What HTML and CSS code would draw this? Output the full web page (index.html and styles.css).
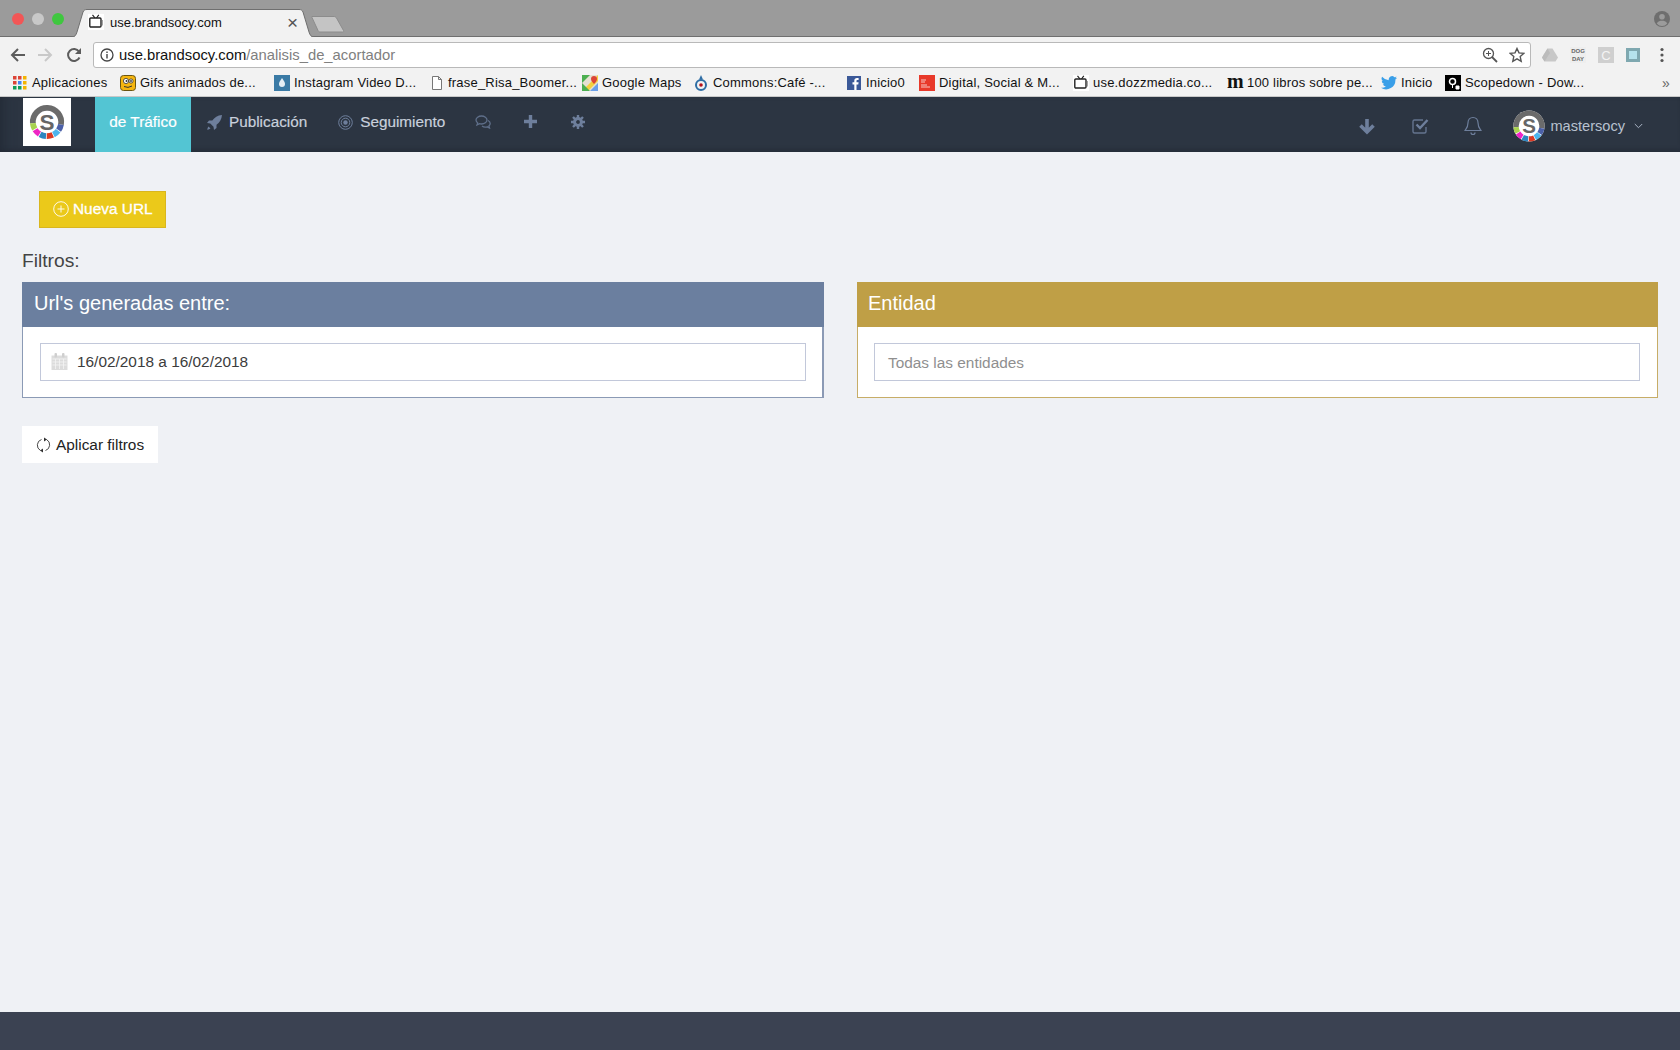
FILE: index.html
```html
<!DOCTYPE html>
<html lang="en">
<head>
  <meta charset="UTF-8" />
  <title>use.brandsocy.com</title>
  <link rel="stylesheet" href="styles.css">
</head>
<body>
  <svg class="sprite" width="0" height="0">
    <defs>
      <symbol id="tv" viewBox="0 0 16 16">
        <rect width="16" height="16" fill="#fff"/>
        <path d="M4.500 .8 7 4M10.800 .8 8.500 4" stroke="#222" stroke-width="1.200" fill="none"/>
        <rect x="1.800" y="4" width="11.200" height="9" rx="1" fill="none" stroke="#222" stroke-width="1.400"/>
        <path d="M13.800 6v5.500" stroke="#666" stroke-width="1.600"/>
      </symbol>
      <symbol id="brand" viewBox="0 0 48 48">
        <circle cx="24" cy="24" r="20.500" fill="#fff"/>
        <g fill="none" stroke-width="7">
          <path d="M7.060 25.480A17 17 0 1 1 40.740 26.950" stroke="#6b6b6b"/>
          <path d="M40.740 26.950A17 17 0 0 1 37.930 33.750" stroke="#4b60a8"/>
          <path d="M37.400 34.470A17 17 0 0 1 31.720 39.150" stroke="#4db4ec"/>
          <path d="M30.910 39.530A17 17 0 0 1 23.700 41" stroke="#da3a24"/>
          <path d="M22.810 40.960A17 17 0 0 1 15.760 38.870" stroke="#2d85c0"/>
          <path d="M14.990 38.420A17 17 0 0 1 9.740 33.260" stroke="#ee25c4"/>
          <path d="M9.280 32.500A17 17 0 0 1 7.060 25.480" stroke="#a8d24f"/>
        </g>
        <text x="24" y="33" text-anchor="middle" class="logo-s">S</text>
      </symbol>
    </defs>
  </svg>

  <div class="tabstrip">
    <div class="lights">
      <span class="light red"></span>
      <span class="light grey"></span>
      <span class="light green"></span>
    </div>
    <div class="tab">
      <svg class="tab-shape" viewBox="0 0 242 28" preserveAspectRatio="none"><path d="M0 28 C3 28 4 26 5 23 L11 3 C12 1 13 .5 15 .5 H227 C229 .5 230 1 231 3 L237 23 C238 26 239 28 242 28" fill="#f2f2f2" stroke="#6f6f6f"/></svg>
      <svg class="fav" width="16" height="16"><use href="#tv"/></svg>
      <span class="tab-title">use.brandsocy.com</span>
      <span class="tab-close">×</span>
    </div>
    <svg class="newtab" width="34" height="18" viewBox="0 0 34 18"><path d="M1 1.500H23C24 1.500 25 2 25.500 3L32.500 15.500C33 16.500 32.500 17 31.500 17H9C8 17 7.500 16.500 7 15.500L1 2.500C.5 1.800 .5 1.500 1 1.500Z" fill="#c4c4c4" stroke="#8c8c8c"/></svg>
    <svg class="profile" width="18" height="18" viewBox="0 0 18 18"><circle cx="9" cy="9" r="8" fill="#6e6e6e"/><circle cx="9" cy="6.800" r="2.800" fill="#9b9b9b"/><path d="M3.800 13.500C5 11.300 7 10.800 9 10.800s4 .5 5.200 2.700A6.500 6.500 0 0 1 3.800 13.500Z" fill="#9b9b9b"/></svg>
  </div>

  <div class="toolbar">
    <svg class="tool back" width="18" height="18" viewBox="0 0 18 18"><path d="M16 9H3M9 3 3 9l6 6" fill="none" stroke="#5c5c5c" stroke-width="2"/></svg>
    <svg class="tool forward" width="18" height="18" viewBox="0 0 18 18"><path d="M2 9h13M9 3l6 6-6 6" fill="none" stroke="#c9c9c9" stroke-width="2"/></svg>
    <svg class="tool reload" width="18" height="18" viewBox="0 0 18 18"><path d="M14.500 11.500A6 6 0 1 1 14 5.500" fill="none" stroke="#5c5c5c" stroke-width="2"/><path d="M16 2v6h-6z" fill="#5c5c5c"/></svg>
    <div class="omnibox">
      <svg class="info" width="14" height="14" viewBox="0 0 14 14"><circle cx="7" cy="7" r="6" fill="none" stroke="#444" stroke-width="1.300"/><path d="M7 6v4.500M7 3.500v1.500" stroke="#444" stroke-width="1.400"/></svg>
      <span class="url">use.brandsocy.com<span class="url-path">/analisis_de_acortador</span></span>
      <svg class="zoom-ic" width="16" height="16" viewBox="0 0 16 16"><circle cx="6.500" cy="6.500" r="5" fill="none" stroke="#555" stroke-width="1.300"/><path d="M10 10l5 5" stroke="#555" stroke-width="1.800"/><path d="M6.500 4v5M4 6.500h5" stroke="#555"/></svg>
      <svg class="star" width="16" height="16" viewBox="0 0 16 16"><path d="M8 1.500l2 4.400 4.800.5-3.600 3.200 1 4.700L8 11.900l-4.200 2.400 1-4.700L1.200 6.400 6 5.900z" fill="none" stroke="#555" stroke-width="1.400"/></svg>
    </div>
    <div class="exts">
      <svg width="16" height="16" viewBox="0 0 16 16"><path d="M5.500 1.500h5L16 10.500l-2.500 4h-11L0 10.500z" fill="#c8c8c8"/><path d="M5.500 1.500 8 6l-5.500 8.500L0 10.500z" fill="#bcbcbc"/></svg>
      <span class="ext-dog">DOG<br>DAY</span>
      <span class="ext-c">C</span>
      <span class="ext-square"><span></span></span>
      <svg width="4" height="16" viewBox="0 0 4 16"><circle cx="2" cy="2.500" r="1.600" fill="#555"/><circle cx="2" cy="8" r="1.600" fill="#555"/><circle cx="2" cy="13.500" r="1.600" fill="#555"/></svg>
    </div>
  </div>

  <div class="bookmarks">
    <a class="bm w-apps"><svg width="14" height="14" viewBox="0 0 14 14"><g><rect width="3.500" height="3.500" fill="#dc4437"/><rect x="5" width="3.500" height="3.500" fill="#dc4437"/><rect x="10" width="3.500" height="3.500" fill="#f4b400"/><rect y="5" width="3.500" height="3.500" fill="#dc4437"/><rect x="5" y="5" width="3.500" height="3.500" fill="#4285f4"/><rect x="10" y="5" width="3.500" height="3.500" fill="#f4b400"/><rect y="10" width="3.500" height="3.500" fill="#0f9d58"/><rect x="5" y="10" width="3.500" height="3.500" fill="#0f9d58"/><rect x="10" y="10" width="3.500" height="3.500" fill="#f4b400"/></g></svg>Aplicaciones</a>
    <a class="bm w-gifs"><svg width="16" height="16" viewBox="0 0 16 16"><rect x=".5" y=".5" width="15" height="15" rx="3" fill="#f5b50f" stroke="#6b5510"/><circle cx="6" cy="6" r="2.600" fill="#fff" stroke="#333" stroke-width=".8"/><circle cx="11" cy="6" r="2.100" fill="#fff" stroke="#333" stroke-width=".8"/><circle cx="6.500" cy="6" r="1" fill="#333"/><circle cx="11" cy="6" r=".9" fill="#333"/><path d="M4 11.500q4 2 8-.5" stroke="#333" fill="none"/></svg>Gifs animados de...</a>
    <a class="bm w-insta"><svg width="16" height="16" viewBox="0 0 16 16"><rect width="16" height="16" fill="#3a7aa5"/><path d="M8 3c2 3 3 4.500 3 6a3 3 0 0 1-6 0c0-1.500 1-3 3-6z" fill="#e4eef5"/></svg>Instagram Video D...</a>
    <a class="bm w-frase"><svg width="12" height="16" viewBox="0 0 12 16"><path d="M1.500 1.500h6l3 3v10h-9zM7.500 1.500v3h3" fill="#fff" stroke="#777"/></svg>frase_Risa_Boomer...</a>
    <a class="bm w-maps"><svg width="16" height="16" viewBox="0 0 16 16"><rect width="16" height="16" fill="#e6e0d2"/><path d="M0 16 16 0v6L6 16z" fill="#f4d03f"/><path d="M0 0h8L0 8z" fill="#4caf50"/><path d="M0 16V8l8 8z" fill="#4caf50"/><path d="M8 16l8-8v8z" fill="#6b9fe8"/><path d="M12 1a3 3 0 0 0-3 3c0 2 3 5 3 5s3-3 3-5a3 3 0 0 0-3-3z" fill="#dc4437"/></svg>Google Maps</a>
    <a class="bm w-commons"><svg width="14" height="16" viewBox="0 0 14 16"><circle cx="7" cy="10" r="5" fill="none" stroke="#2e6da4" stroke-width="2"/><circle cx="7" cy="10" r="1.800" fill="#b5121b"/><path d="M7 0 9 4.500H5z" fill="#2e6da4"/></svg>Commons:Café -...</a>
    <a class="bm w-inicio"><svg width="14" height="14" viewBox="0 0 14 14"><rect width="14" height="14" fill="#3b5998"/><path d="M9.500 14V8.500h1.800l.3-2.200H9.500V5c0-.7.2-1 1-1h1.100V2.100C11.300 2 10.700 2 10 2 8.400 2 7.300 3 7.300 4.700v1.600H5.500v2.200h1.800V14z" fill="#fff"/></svg>Inicio0</a>
    <a class="bm w-digital"><svg width="16" height="16" viewBox="0 0 16 16"><rect width="16" height="16" fill="#e8392a"/><path d="M2 5h5M2 7h4M2 10h6M2 12h9" stroke="#f7c9c4"/></svg>Digital, Social &amp; M...</a>
    <a class="bm w-dozz"><svg width="16" height="16"><use href="#tv"/></svg>use.dozzmedia.co...</a>
    <a class="bm w-libros"><span class="bm-m">m</span>100 libros sobre pe...</a>
    <a class="bm w-tw"><svg width="16" height="14" viewBox="0 0 16 14"><path d="M16 1.700a6.500 6.500 0 0 1-1.900.5A3.300 3.300 0 0 0 15.500.4a6.600 6.600 0 0 1-2.100.8 3.300 3.300 0 0 0-5.600 3A9.300 9.300 0 0 1 1.100.8a3.300 3.300 0 0 0 1 4.400A3.300 3.300 0 0 1 .7 4.800a3.300 3.300 0 0 0 2.600 3.200 3.300 3.300 0 0 1-1.500.1 3.300 3.300 0 0 0 3.100 2.300A6.600 6.600 0 0 1 0 11.800 9.300 9.300 0 0 0 14.400 3.500 6.600 6.600 0 0 0 16 1.700z" fill="#3a9fe8"/></svg>Inicio</a>
    <a class="bm"><svg width="16" height="16" viewBox="0 0 16 16"><rect width="16" height="16" fill="#000"/><circle cx="7.500" cy="6.500" r="3" fill="none" stroke="#fff" stroke-width="1.500"/><path d="M7.500 9.500 7.500 13M11 11h3v3h-3z" stroke="#fff" fill="#fff"/></svg>Scopedown - Dow...</a>
    <span class="bm-more">»</span>
  </div>

  <div class="navbar">
    <a class="logo"><svg width="40" height="40"><use href="#brand"/></svg></a>
    <a class="nav-active">de Tráfico</a>
    <a class="nav-item first">
      <svg width="15" height="15" viewBox="0 0 15 15"><path d="M15 0C10.500 .3 7.500 2.500 5.300 5.500H2L0 8l3.300.5 3.200 3.200.5 3.300 2.500-2V9.700C12.500 7.500 14.700 4.500 15 0zM1.500 11.500C.5 12.500.3 14.700.3 14.700s2.200-.2 3.200-1.200z" fill="#6e7f9c"/></svg>
      Publicación
    </a>
    <a class="nav-item">
      <svg width="15" height="15" viewBox="0 0 15 15"><g fill="none" stroke="#6e7f9c"><circle cx="7.500" cy="7.500" r="6.800"/><circle cx="7.500" cy="7.500" r="4.300"/></g><circle cx="7.500" cy="7.500" r="2.200" fill="#6e7f9c"/></svg>
      Seguimiento
    </a>
    <a class="nav-icon chat"><svg width="16" height="14" viewBox="0 0 16 14"><path d="M6.500 1C3.500 1 1 2.800 1 5c0 1.100.7 2.100 1.700 2.900L2 10l2.500-1.300c.6.200 1.300.3 2 .3 3 0 5.500-1.800 5.500-4S9.500 1 6.500 1z" fill="none" stroke="#5f6f8a" stroke-width="1.300"/><path d="M13 5.500c1.300.7 2.200 1.800 2.200 3 0 1-.5 1.800-1.300 2.500l.6 2-2.300-1.200c-1.800.5-3.900.2-5.200-.8" fill="none" stroke="#5f6f8a" stroke-width="1.300"/></svg></a>
    <a class="nav-icon plus"><svg width="13" height="13" viewBox="0 0 13 13"><path d="M6.500 0v13M0 6.500h13" stroke="#6e7f9c" stroke-width="3.400"/></svg></a>
    <a class="nav-icon gear"><svg width="14" height="14" viewBox="0 0 14 14"><path d="M7 3.600a3.400 3.400 0 1 0 0 6.800 3.400 3.400 0 0 0 0-6.800z" fill="none" stroke="#6e7f9c" stroke-width="3"/><path d="M7 0v3M7 11v3M0 7h3M11 7h3M2 2l2.100 2.100M9.900 9.900 12 12M12 2 9.900 4.100M4.100 9.900 2 12" stroke="#6e7f9c" stroke-width="2.400"/></svg></a>

    <div class="nav-right">
      <svg class="nr-ic" width="18" height="18" viewBox="0 0 18 18"><path d="M9 2v13M2.500 8.500 9 15l6.500-6.500" fill="none" stroke="#6e7f9c" stroke-width="3.600"/></svg>
      <svg class="nr-ic" width="18" height="18" viewBox="0 0 18 18"><path d="M15 10v4.500a1.500 1.500 0 0 1-1.500 1.500h-10A1.500 1.500 0 0 1 2 14.500v-10A1.500 1.500 0 0 1 3.500 3H12" fill="none" stroke="#64748f" stroke-width="1.400"/><path d="M5.500 7.500 9 11l7.500-8" fill="none" stroke="#6e7f9c" stroke-width="2.400"/></svg>
      <svg class="nr-ic" width="18" height="20" viewBox="0 0 18 20"><path d="M9 1.500c-3 0-5 2.300-5 5.300 0 4.700-2 6.200-3 7.700h16c-1-1.500-3-3-3-7.700 0-3-2-5.300-5-5.300zM7 16.500a2 2 0 0 0 4 0" fill="none" stroke="#6e7f9c" stroke-width="1.200"/></svg>
      <svg class="avatar" width="32" height="32" viewBox="3 3 42 42"><use href="#brand" width="48" height="48"/></svg>
      <span class="username">mastersocy</span>
      <svg class="caret" width="9" height="6" viewBox="0 0 9 6"><path d="M.8 1l3.700 3.700L8.200 1" fill="none" stroke="#a9b3c4"/></svg>
    </div>
  </div>

  <main class="content">
    <button class="btn-new">
      <svg width="16" height="16" viewBox="0 0 16 16"><circle cx="8" cy="8" r="7.300" fill="none" stroke="#fff" stroke-width=".9"/><path d="M8 4.500v7M4.500 8h7" stroke="#fff" stroke-width=".9"/></svg>
      Nueva URL
    </button>
    <div class="filters-label">Filtros:</div>
    <div class="filters">
      <div class="panel blue">
        <div class="panel-head">Url's generadas entre:</div>
        <div class="panel-body">
          <div class="field">
            <svg width="17" height="17" viewBox="0 0 17 17"><path d="M.5 2.500h16V17H.5z" fill="#dcdcdc"/><path d="M1.500 6h14M1.500 9h14M1.500 12h14M4.500 6v10M8.500 6v10M12.500 6v10" stroke="#f4f4f4" stroke-width=".8"/><rect x="3.500" y="0" width="2.500" height="4.500" rx="1" fill="#cfcfcf"/><rect x="11" y="0" width="2.500" height="4.500" rx="1" fill="#cfcfcf"/></svg>
            <span>16/02/2018 a 16/02/2018</span>
          </div>
        </div>
      </div>
      <div class="panel gold">
        <div class="panel-head">Entidad</div>
        <div class="panel-body">
          <div class="field placeholder"><span>Todas las entidades</span></div>
        </div>
      </div>
    </div>
    <button class="btn-apply">
      <svg width="15" height="16" viewBox="0 0 15 16"><path d="M5.500 2.500A6 6 0 0 0 4.500 13.500M9.500 13.500A6 6 0 0 0 10.500 2.500" fill="none" stroke="#333" stroke-width=".9"/><path d="M8 .5v4l3-2zM7 15.500v-4l-3 2z" fill="#333"/></svg>
      Aplicar filtros
    </button>
  </main>

  <footer class="footer"></footer>
</body>
</html>
```

FILE: styles.css
```css
* { box-sizing: border-box; }
html, body { height: 100%; }
body {
  margin: 0;
  height: 1050px;
  overflow: hidden;
  display: flex;
  flex-direction: column;
  font-family: "Liberation Sans", Arial, sans-serif;
  background: #eff1f5;
}
a { display: flex; align-items: center; }
.sprite { position: absolute; }
.logo-s { font: bold 27px "Liberation Sans", Arial, sans-serif; fill: #666; }

/* browser chrome */
.tabstrip {
  height: 37px;
  background: #9b9b9b;
  border-bottom: 1px solid #6f6f6f;
  display: flex;
  align-items: flex-end;
  flex: none;
}
.lights {
  display: flex;
  gap: 8px;
  margin-left: 12px;
  align-self: flex-start;
  margin-top: 13px;
}
.light { width: 12px; height: 12px; border-radius: 50%; }
.light.red { background: #f25656; }
.light.grey { background: #c8c8c8; }
.light.green { background: #3fc73f; }
.tab {
  position: relative;
  width: 242px;
  height: 28px;
  margin-left: 8px;
  margin-bottom: -1px;
  display: flex;
  align-items: center;
  padding: 0 16px 2px 16px;
  font-size: 13px;
  color: #111;
}
.tab-shape { position: absolute; left: 0; top: 0; width: 100%; height: 100%; }
.fav, .tab-title, .tab-close { position: relative; }
.tab-title { margin-left: 6px; }
.tab-close { margin-left: auto; font-size: 19px; color: #555; line-height: 1; }
.newtab { margin-left: -3px; margin-bottom: 3px; }
.profile { margin-left: auto; margin-right: 9px; margin-bottom: 8px; }

.toolbar {
  height: 33px;
  padding-top: 3px;
  background: #f2f2f2;
  display: flex;
  align-items: center;
  flex: none;
}
.tool { flex: none; }
.back { margin-left: 9px; }
.forward { margin-left: 9px; }
.reload { margin-left: 11px; }
.omnibox {
  width: 1438px;
  height: 26px;
  margin-left: 10px;
  background: #fff;
  border: 1px solid #b9b9b9;
  border-radius: 3px;
  display: flex;
  align-items: center;
  padding: 0 5px 0 6px;
  font-size: 14.800px;
}
.url { margin-left: 5px; color: #111; }
.url-path { color: #808080; }
.zoom-ic { margin-left: auto; }
.star { margin-left: 11px; }
.exts {
  display: flex;
  align-items: center;
  margin-left: 11px;
  gap: 12px;
}
.ext-dog {
  width: 16px;
  height: 16px;
  background: #eee;
  font-size: 6px;
  font-weight: bold;
  line-height: 8px;
  text-align: center;
  color: #666;
}
.ext-c {
  width: 16px;
  height: 16px;
  background: #cfcfcf;
  color: #f4f4f4;
  font-size: 13px;
  line-height: 18px;
  text-align: center;
}
.ext-square {
  width: 14px;
  height: 14px;
  background: #7fa8b0;
  padding: 3px;
}
.ext-square span { display: block; width: 8px; height: 8px; background: #b5e2ec; }
.exts svg:last-child { margin-left: 8px; }

.bookmarks {
  height: 27px;
  background: #f2f2f2;
  border-bottom: 1px solid #c8c8c8;
  display: flex;
  align-items: center;
  padding: 0 0 1px 13px;
  font-size: 13px;
  color: #111;
  letter-spacing: 0.2px;
  flex: none;
}
.bm { gap: 4px; white-space: nowrap; flex: none; }
.bm svg { flex: none; }
.bm-m { font: bold 20px "Liberation Serif", serif; width: 16px; line-height: 14px; margin-top: -4px; }
.w-apps { width: 107px; gap: 5px; }
.w-gifs { width: 154px; }
.w-insta { width: 157px; }
.w-frase { width: 151px; gap: 5px; }
.w-maps { width: 112px; }
.w-commons { width: 153px; gap: 5px; }
.w-inicio { width: 72px; gap: 5px; }
.w-digital { width: 154px; }
.w-dozz { width: 154px; }
.w-libros { width: 154px; }
.w-tw { width: 64px; }
.bm-more { margin-left: auto; margin-right: 10px; color: #666; font-size: 14px; }

/* app nav */
.navbar {
  height: 55px;
  background: #2c3542;
  box-shadow: inset 0 -4px 5px -3px #232a35, inset 14px 0 14px -12px #232a35;
  display: flex;
  align-items: stretch;
  padding-left: 23px;
  flex: none;
}
.logo {
  width: 48px;
  height: 48px;
  margin-top: 1px;
  background: #fff;
  justify-content: center;
}
.nav-active {
  width: 96px;
  margin-left: 24px;
  background: #53c5d3;
  color: #fff;
  font-size: 15.400px;
  -webkit-text-stroke: 0.2px #fff;
  justify-content: center;
  padding-bottom: 5px;
}
.nav-item {
  gap: 7px;
  color: #c9d0dc;
  font-size: 15.300px;
  -webkit-text-stroke: 0.2px #c9d0dc;
  padding-bottom: 5px;
  margin-left: 31px;
}
.nav-item.first { margin-left: 16px; }
.nav-icon { padding-bottom: 6px; }
.chat { margin-left: 30px; }
.plus { margin-left: 33px; }
.gear { margin-left: 34px; }
.nav-right {
  margin-left: auto;
  display: flex;
  align-items: center;
  padding: 2px 37px 0 0;
}
.nr-ic { margin-right: 35px; }
.avatar { margin-left: -4px; }
.username { margin-left: 5px; font-size: 14.600px; color: #b8c1cf; }
.caret { margin-left: 9px; }

/* page */
.content { flex: 1; padding: 39px 22px 0; }
.btn-new {
  display: flex;
  align-items: center;
  gap: 4px;
  width: 127px;
  height: 37px;
  margin-left: 17px;
  padding: 0 0 2px 13px;
  background: #ebc91a;
  border: 1px solid #d9b61e;
  color: #fff;
  font: 15.400px "Liberation Sans", Arial, sans-serif;
  -webkit-text-stroke: 0.3px #fff;
}
.filters-label {
  margin-top: 21px;
  margin-bottom: 9px;
  font-size: 19.200px;
  line-height: 24px;
  color: #444;
}
.filters {
  display: flex;
  gap: 33px;
}
.panel { flex: 1; border: 1px solid; background: #fff; border-top: 0; }
.panel.blue { border-color: #8b9ab5; border-right-width: 2px; }
.panel.gold { border-color: #c7ad67; }
.panel-head {
  height: 45px;
  margin: 0 -1px;
  padding-left: 12px;
  padding-bottom: 3px;
  display: flex;
  align-items: center;
  color: #fff;
  font-size: 20px;
}
.gold .panel-head { padding-left: 11px; }
.blue .panel-head { background: #6b7f9f; margin-right: -2px; }
.gold .panel-head { background: #bf9f46; }
.panel-body { padding: 16px; }
.blue .panel-body { padding-left: 17px; }
.gold .panel-body { padding-right: 17px; }
.field {
  height: 38px;
  border: 1px solid #c2c8da;
  display: flex;
  align-items: center;
  gap: 9px;
  padding: 0 0 1px 10px;
  font-size: 15.400px;
  color: #3c3c3c;
}
.field.placeholder { padding: 1px 0 0 13px; color: #8f8f8f; }
.btn-apply {
  display: flex;
  align-items: center;
  gap: 5px;
  width: 136px;
  height: 37px;
  margin-top: 28px;
  padding: 0 0 0 14px;
  background: #fff;
  border: 0;
  color: #222;
  font: 15.400px "Liberation Sans", Arial, sans-serif;
}
.footer { height: 38px; background: #3b4252; flex: none; }
```
